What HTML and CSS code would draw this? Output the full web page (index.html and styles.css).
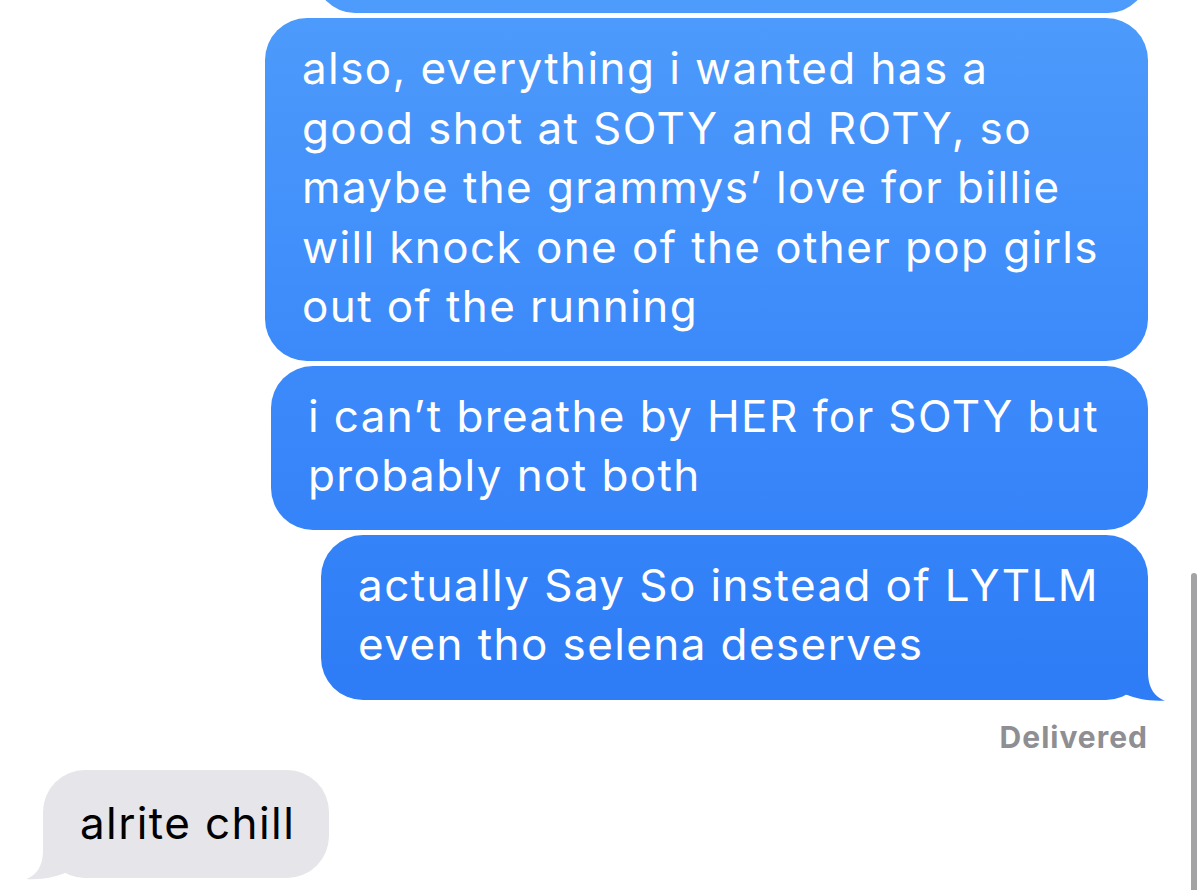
FILE: index.html
```html
<!DOCTYPE html>
<html lang="en">
<head>
<meta charset="utf-8">
<title>Messages</title>
<link rel="stylesheet" href="styles.css">
</head>
<body>
<main class="thread">
  <div class="bubble sent cut-off"></div>
  <div class="bubble sent">also, everything i wanted has a<br>good shot at SOTY and ROTY, so<br>maybe the grammys’ love for billie<br>will knock one of the other pop girls<br>out of the running</div>
  <div class="bubble sent">i can’t breathe by HER for SOTY but<br>probably not both</div>
  <div class="bubble sent tail">actually Say So instead of LYTLM<br>even tho selena deserves</div>
  <div class="status">Delivered</div>
  <div class="bubble received tail">alrite chill</div>
</main>
<div class="scrollbar"></div>
</body>
</html>
```
FILE: styles.css
```css
html, body {
  margin: 0;
  padding: 0;
  background: #ffffff;
  overflow: hidden;
  height: 890px;
}

body {
  font-family: Inter, "Liberation Sans", Arial, sans-serif;
}

.thread {
  display: flex;
  flex-direction: column;
  align-items: flex-end;
  padding: 0 52px 0 43px;
}

.bubble {
  position: relative;
  box-sizing: border-box;
  font-size: 44px;
  letter-spacing: 1.4px;
  line-height: 59.5px;
  white-space: nowrap;
  border-radius: 42px;
  padding: 21px 49px 24px 37px;
  margin-top: 5px;
}

.bubble.tail {
  padding-bottom: 25px;
}

.sent {
  color: #ffffff;
  background-image: linear-gradient(to bottom, #4d9bfb 0px, #3c8afa 360px, #2e7cf6 700px, #2672f5 890px);
  background-attachment: fixed;
}

.cut-off {
  width: 833px;
  height: 80px;
  margin-top: -67px;
}

.received {
  align-self: flex-start;
  color: #000000;
  background: #e5e5ea;
  padding: 24px 34px 26px 37px;
  margin-top: 15px;
}

.tail::after {
  content: "";
  position: absolute;
  bottom: -2px;
  width: 50px;
  height: 57px;
  background: inherit;
}

.sent.tail::after {
  right: -20px;
  clip-path: path("M8,50 C18,54 32,57 47,56 C38,53 30,45 30,27 L30,5 L8,5 Z");
}

.received.tail::after {
  left: -20px;
  clip-path: path("M42,50 C32,54 18,57 3,56 C12,53 20,45 20,27 L20,5 L42,5 Z");
}

.status {
  margin-top: 19px;
  font-size: 30px;
  letter-spacing: 1px;
  line-height: 36px;
  font-weight: 700;
  color: #8e8e93;
}

.scrollbar {
  position: absolute;
  right: 3px;
  top: 573px;
  width: 6px;
  height: 330px;
  border-radius: 3px;
  background: #a3a3a6;
}
```
